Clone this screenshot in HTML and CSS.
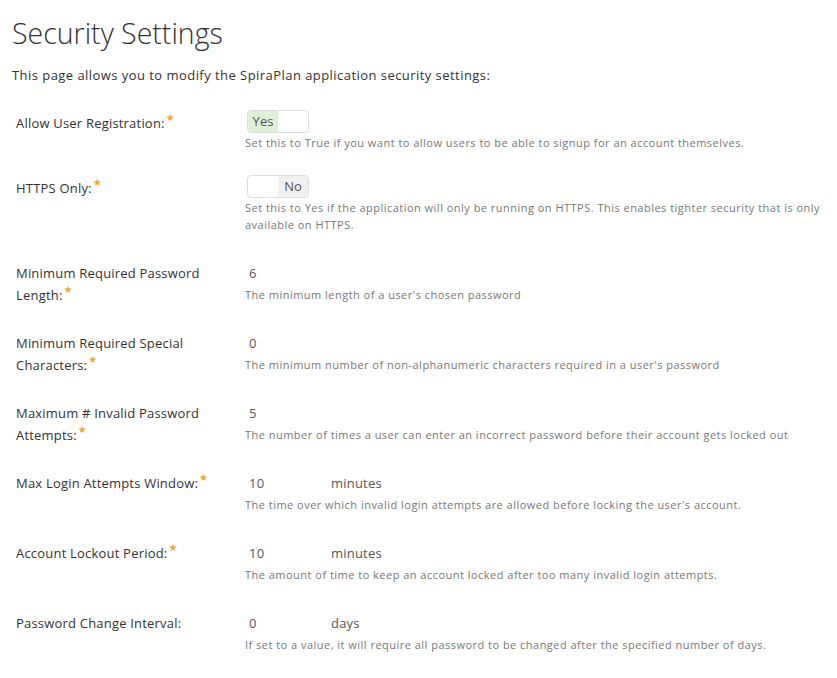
FILE: index.html
```html
<!DOCTYPE html>
<html>
<head>
<meta charset="utf-8">
<link rel="stylesheet" href="styles.css">
</head>
<body>
<div class="page">
  <h1 class="title">Security Settings</h1>
  <p class="intro">This page allows you to modify the SpiraPlan application security settings:</p>
  <div class="form">
    <div class="row row-toggle">
      <div class="label">Allow User Registration:<span class="req">★</span></div>
      <div class="field">
        <div class="toggle"><span class="opt on-yes">Yes</span><span class="opt"></span></div>
        <div class="desc">Set this to True if you want to allow users to be able to signup for an account themselves.</div>
      </div>
    </div>
    <div class="row row-toggle row-tall">
      <div class="label">HTTPS Only:<span class="req">★</span></div>
      <div class="field">
        <div class="toggle"><span class="opt"></span><span class="opt on-no">No</span></div>
        <div class="desc">Set this to Yes if the application will only be running on HTTPS. This enables tighter security that is only available on HTTPS.</div>
      </div>
    </div>
    <div class="row">
      <div class="label">Minimum Required Password Length:<span class="req">★</span></div>
      <div class="field">
        <div class="value"><span class="num">6</span></div>
        <div class="desc">The minimum length of a user's chosen password</div>
      </div>
    </div>
    <div class="row">
      <div class="label">Minimum Required Special Characters:<span class="req">★</span></div>
      <div class="field">
        <div class="value"><span class="num">0</span></div>
        <div class="desc">The minimum number of non-alphanumeric characters required in a user's password</div>
      </div>
    </div>
    <div class="row">
      <div class="label">Maximum # Invalid Password Attempts:<span class="req">★</span></div>
      <div class="field">
        <div class="value"><span class="num">5</span></div>
        <div class="desc">The number of times a user can enter an incorrect password before their account gets locked out</div>
      </div>
    </div>
    <div class="row">
      <div class="label">Max Login Attempts Window:<span class="req">★</span></div>
      <div class="field">
        <div class="value"><span class="num">10</span><span class="unit">minutes</span></div>
        <div class="desc">The time over which invalid login attempts are allowed before locking the user's account.</div>
      </div>
    </div>
    <div class="row">
      <div class="label">Account Lockout Period:<span class="req">★</span></div>
      <div class="field">
        <div class="value"><span class="num">10</span><span class="unit">minutes</span></div>
        <div class="desc">The amount of time to keep an account locked after too many invalid login attempts.</div>
      </div>
    </div>
    <div class="row">
      <div class="label">Password Change Interval:</div>
      <div class="field">
        <div class="value"><span class="num">0</span><span class="unit">days</span></div>
        <div class="desc">If set to a value, it will require all password to be changed after the specified number of days.</div>
      </div>
    </div>
  </div>
</div>
</body>
</html>
```

FILE: styles.css
```css
html, body {
  margin: 0;
  padding: 0;
  background: #fff;
}
body {
  font-family: "Open Sans", "DejaVu Sans", sans-serif;
  color: #333;
}
.page {
  padding: 0 8px 0 12px;
}
.title {
  margin: 0;
  padding-top: 13px;
  font-family: "Open Sans", sans-serif;
  font-weight: 300;
  font-size: 28.5px;
  line-height: 40px;
  color: #333;
}
.intro {
  margin: 13px 0 0 0;
  font-size: 13px;
  line-height: 18px;
  letter-spacing: 0.45px;
  color: #333;
}
.form {
  margin-top: 26px;
  padding-left: 4px;
}
.row {
  display: flex;
  min-height: 46px;
  margin-bottom: 24px;
}
.row-toggle {
  min-height: 41px;
}
.row-tall {
  min-height: 63px;
}
.label {
  width: 229px;
  flex: none;
  padding-right: 30px;
  box-sizing: border-box;
  font-size: 13px;
  line-height: 22px;
  letter-spacing: 0.2px;
  color: #333;
}
.row-toggle .label {
  padding-top: 2px;
}
.req {
  position: relative;
  top: -7px;
  line-height: 0;
  color: #f5a623;
  font-size: 10px;
  margin-left: 1px;
}
.field {
  flex: 1;
  min-width: 0;
}
.toggle {
  display: flex;
  width: max-content;
  margin-left: 2px;
  height: 23px;
  border: 1px solid #ddd;
  border-radius: 4px;
  overflow: hidden;
  box-sizing: border-box;
}
.opt {
  width: 30px;
  font-size: 13px;
  line-height: 21px;
  text-align: center;
  color: #555;
}
.on-yes { background: #dff0d8; }
.on-no { background: #f0f0f0; }
.value {
  display: flex;
  height: 23px;
  font-size: 13px;
  line-height: 23px;
  color: #555;
  letter-spacing: 0.2px;
}
.num {
  width: 86px;
  padding-left: 4px;
  box-sizing: border-box;
}
.desc {
  font-size: 11px;
  line-height: 17px;
  letter-spacing: 0.48px;
  color: #777;
  margin-top: 1px;
}
```
